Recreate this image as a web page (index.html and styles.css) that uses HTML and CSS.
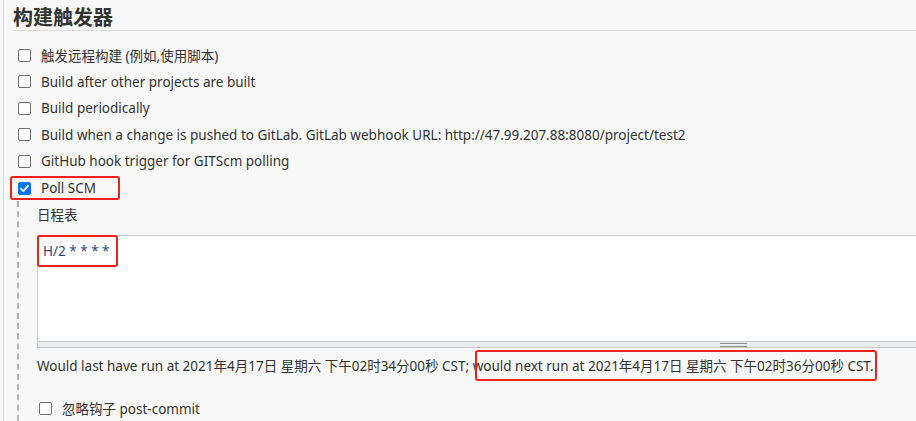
FILE: index.html
```html
<!DOCTYPE html>
<html lang="zh">
<head>
<meta charset="utf-8">
<link rel="stylesheet" href="styles.css">
</head>
<body>
<div class="page">
  <div class="section">
    <h2 class="title">构建触发器</h2>
    <div class="options">
      <label class="opt"><span class="cb"></span><span>触发远程构建 (例如,使用脚本)</span></label>
      <label class="opt"><span class="cb"></span><span>Build after other projects are built</span></label>
      <label class="opt"><span class="cb"></span><span>Build periodically</span></label>
      <label class="opt"><span class="cb"></span><span>Build when a change is pushed to GitLab. GitLab webhook URL: http://47.99.207.88:8080/project/test2</span></label>
      <label class="opt"><span class="cb"></span><span>GitHub hook trigger for GITScm polling</span></label>
      <div class="opt opt-marked"><span class="mark"><span class="cb checked"><svg viewBox="0 0 13 13" width="13" height="13"><path d="M3 6.8 L5.4 9.2 L10 3.8" fill="none" stroke="#fff" stroke-width="1.8" stroke-linecap="round" stroke-linejoin="round"/></svg></span><span>Poll SCM</span></span></div>
    </div>
    <div class="nested">
      <div class="field-label">日程表</div>
      <div class="textarea">
        <div class="ta-body"><span class="spec">H/2 * * * *</span></div>
        <div class="ta-grip"><span class="grip"></span></div>
      </div>
      <div class="info">Would last have run at 2021年4月17日 星期六 下午02时34分00秒 CST; <span class="hl">would next run at 2021年4月17日 星期六 下午02时36分00秒 CST.</span></div>
      <label class="opt opt-sub"><span class="cb"></span><span>忽略钩子 post-commit</span></label>
    </div>
  </div>
</div>
</body>
</html>
```
FILE: styles.css
```css
* { box-sizing: border-box; }
html, body { margin: 0; padding: 0; }
body {
  background: #f8f8f8;
  color: #333;
  font-family: "Noto Sans", "Noto Sans CJK SC", sans-serif;
  font-size: 13.5px;
  width: 916px;
  height: 421px;
  overflow: hidden;
}
.page {
  margin-left: 3px;
  border-left: 1px solid #d9d9d9;
  height: 421px;
  padding-left: 9px;
}
.title {
  margin: 0;
  padding-top: 4px;
  font-size: 20px;
  line-height: 28px;
  font-weight: 700;
  color: #333;
  border-bottom: 1px solid #dcdcdc;
  height: 31px;
}
.options {
  padding-top: 11px;
  display: flex;
  flex-direction: column;
}
.opt {
  display: flex;
  align-items: center;
  gap: 10px;
  height: 26.5px;
  padding-left: 5px;
  white-space: nowrap;
}
.cb {
  width: 13px;
  height: 13px;
  border: 1px solid #6f6f6f;
  border-radius: 2px;
  background: #fff;
  flex: none;
  display: inline-flex;
}
.cb.checked {
  background: #0075ff;
  border-color: #0075ff;
}
.cb.checked svg { margin: -1px; }
.opt-marked { padding-left: 0; margin-left: -3px; }
.mark {
  display: inline-flex;
  align-items: center;
  gap: 10px;
  border: 2px solid #f0201a;
  border-radius: 3px;
  padding: 3px 22px 2px 6px;
  height: 24px;
}
.nested {
  margin-left: 4px;
  border-left: 2px dashed #b5b5b5;
  padding-left: 18px;
  padding-top: 6px;
  height: 240px;
}
.field-label {
  line-height: 17px;
  margin-bottom: 11px;
}
.textarea {
  background: #fff;
  border: 1px solid #c9c9c9;
  border-right: none;
  height: 113px;
  display: flex;
  flex-direction: column;
}
.ta-body { flex: 1; }
.spec {
  display: inline-block;
  white-space: nowrap;
  border: 2px solid #f0201a;
  border-radius: 3px;
  padding: 5px 0 6px 4px;
  color: #2b4a78;
  font-size: 13.5px;
  line-height: 18px;
  margin-top: -1px;
  margin-left: -1px;
  width: 81px;
  height: 32px;
}
.ta-grip {
  height: 6px;
  background: #e8ecef;
  border-top: 1px solid #c5c9cc;
  display: flex;
  align-items: center;
  padding-left: 682px;
}
.grip {
  width: 27px;
  height: 4px;
  border-top: 1px solid #8c8c8c;
  border-bottom: 1px solid #8c8c8c;
}
.info {
  margin-top: 10px;
  line-height: 17px;
  white-space: nowrap;
}
.hl { position: relative; }
.hl::after {
  content: "";
  position: absolute;
  left: 2px;
  right: -3px;
  top: -7px;
  bottom: -6px;
  border: 2px solid #f0201a;
  border-radius: 3px;
}
.opt-sub {
  margin-top: 20px;
  padding-left: 2px;
}
```
